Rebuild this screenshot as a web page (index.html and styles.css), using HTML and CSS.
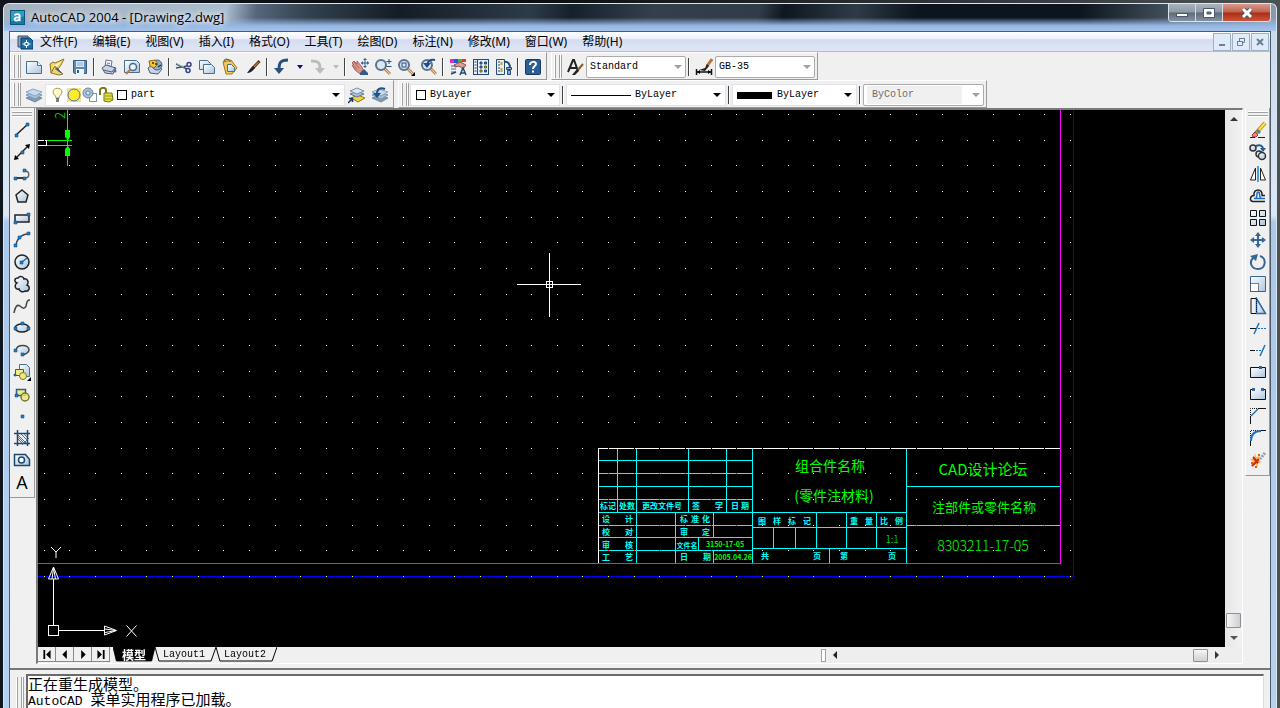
FILE: index.html
```html
<!DOCTYPE html>
<html lang="zh-CN">
<head>
<meta charset="utf-8">
<title>AutoCAD 2004 - [Drawing2.dwg]</title>
<link rel="stylesheet" href="styles.css">
</head>
<body>
<svg class="defs" width="0" height="0" aria-hidden="true">
  <defs>
    <linearGradient id="pale" x1="0" y1="0" x2="1" y2="1"><stop offset="0" stop-color="#fff"/><stop offset="1" stop-color="#a9c4de"/></linearGradient>
    <symbol id="lens" viewBox="0 0 18 18"><path d="M10 10l6 6" stroke="#b98a55" stroke-width="3"/><path d="M10 10l6 6" stroke="#f0d0a0" stroke-width="1"/><circle cx="7" cy="7" r="5" fill="#d9e8f5" stroke="#5d7389" stroke-width="2"/></symbol>
    <symbol id="layers" viewBox="0 0 18 18"><path d="M1 12l7-3 9 3-7 4z" fill="#7f9ab4" stroke="#6f8aa4"/><path d="M1 9l7-3 9 3-7 4z" fill="#a9c0d6" stroke="#7c98b2"/><path d="M1 6l7-3 9 3-7 4z" fill="#c7d9ea" stroke="#8ba4bb"/></symbol>
  </defs>
</svg>
<div class="window">
  <header class="titlebar">
    <svg class="logo" viewBox="0 0 15 15"><rect width="15" height="15" fill="#1479a8"/><path d="M0 0h15v6L0 12z" fill="#2f9cc9"/><path d="M4 5c2-2 6-2 6 1v4c0 1 1 1 1 1M10 7c-7 0-7 4-4 4 2 0 4-1 4-3" fill="none" stroke="#fff" stroke-width="2"/></svg>
    <h1>AutoCAD 2004 - [Drawing2.dwg]</h1>
    <div class="winbtns">
      <button class="wb min" aria-label="最小化"><svg viewBox="0 0 14 10"><rect x="1.500" y="5.500" width="11" height="3" fill="#fff" stroke="#4c566a"/></svg></button>
      <button class="wb max" aria-label="最大化"><svg viewBox="0 0 14 10"><path d="M1.500.5h11v9h-11zM5 4v2h4V4z" fill="#fff" fill-rule="evenodd" stroke="#4c566a"/></svg></button>
      <button class="wb close" aria-label="关闭"><svg viewBox="0 0 14 10"><path d="M3 1l8 8M11 1L3 9" stroke="#4c566a" stroke-width="5"/><path d="M3 1l8 8M11 1L3 9" stroke="#fff" stroke-width="3"/></svg></button>
    </div>
  </header>

  <div class="client">
    <nav class="menubar">
      <svg class="doc" viewBox="0 0 16 16"><path d="M1 2h10v11H1z" fill="#8ea2b5" stroke="#334d66"/><path d="M4 4h9l3 3v8H4z" fill="#186fa8" stroke="#083a66"/><path d="M9.500 6v8M5.500 10h8" stroke="#fff"/><rect x="8" y="8.500" width="3" height="3" fill="#186fa8" stroke="#fff"/></svg>
      <button>文件(F)</button><button>编辑(E)</button><button>视图(V)</button><button>插入(I)</button><button>格式(O)</button><button>工具(T)</button><button>绘图(D)</button><button>标注(N)</button><button>修改(M)</button><button>窗口(W)</button><button>帮助(H)</button>
      <div class="mdi">
        <button aria-label="最小化文档"><svg viewBox="0 0 10 10"><path d="M2 8h6" stroke="#6a7f95" stroke-width="2"/></svg></button>
        <button aria-label="还原文档"><svg viewBox="0 0 10 10"><path d="M3.500 4V1.500h5v4H7M3 1.500h6M1.500 4.500h5v4h-5zM1 4.500h6" fill="none" stroke="#6a7f95"/></svg></button>
        <button aria-label="关闭文档"><svg viewBox="0 0 10 10"><path d="M2 2l6 6M8 2L2 8" stroke="#6a7f95" stroke-width="2"/></svg></button>
      </div>
    </nav>

    <div class="dock">
      <div class="bar" role="toolbar" aria-label="标准">
        <i class="grip"></i>
        <button aria-label="新建"><svg viewBox="0 0 18 18"><path d="M1.500 3.500h11l4 4v8h-15z" fill="url(#pale)" stroke="#45708f"/><path d="M12.500 3.500v4h4" fill="#fff" stroke="#45708f"/></svg></button>
        <button aria-label="打开"><svg viewBox="0 0 18 18"><path d="M2 6l3-2 2 1 9-4-3 6-3 4 5 5-4 1L3 15z" fill="#f0d66a" stroke="#8a752c"/><path d="M5 8l8-4-6 7z" fill="#fff6c0"/><path d="M9 9l5 7-7-5z" fill="#2a5d94"/><path d="M3 15l4-7 2 4" fill="none" stroke="#8a6d1e"/></svg></button>
        <button aria-label="保存"><svg viewBox="0 0 18 18"><path d="M2.500 2.500h13v13h-12l-1-1z" fill="#5f89b5" stroke="#355c86"/><rect x="5" y="3" width="8" height="6" fill="#dce9f5"/><path d="M6 5h6M6 7h6" stroke="#89a8c7"/><rect x="5" y="11" width="8" height="5" fill="#eef4fa"/><rect x="6" y="12" width="2" height="3" fill="#355c86"/></svg></button>
        <i class="sep"></i>
        <button aria-label="打印"><svg viewBox="0 0 18 18"><path d="M5 9l1-7 6 1-1 6" fill="#fff" stroke="#66728c"/><path d="M2 10l4-3 10 3-3 6-8-1z" fill="#cbd3e6" stroke="#4d5a7c"/><path d="M3 12l9 2M12 14l3-4" stroke="#4d5a7c"/><path d="M7 5l3 .5M7 7l3 .5" stroke="#66728c"/><circle cx="15" cy="13" r="1.500" fill="#5a6890"/></svg></button>
        <button aria-label="打印预览"><svg viewBox="0 0 18 18"><path d="M1.500 2.500h12l3 3v9h-15z" fill="url(#pale)" stroke="#45708f"/><circle cx="10" cy="9" r="3.500" fill="#e9f5ff" stroke="#4c6a86" stroke-width="1.500"/><path d="M7.500 11.500L3 16" stroke="#b87942" stroke-width="2"/></svg></button>
        <button aria-label="发布"><svg viewBox="0 0 18 18"><path d="M2 10l4-3 10 4-4 5-8-1z" fill="#cbd3e6" stroke="#4d5a7c"/><circle cx="11" cy="7" r="5" fill="#8fb0d2" stroke="#3f618a"/><path d="M3 3l6-1 3 4-4 4-4-2z" fill="#f5c73c" stroke="#8c6a12"/><path d="M6 5h2M9 6h2M12 9l3-2" stroke="#402c08" stroke-width="1.500"/></svg></button>
        <i class="sep"></i>
        <button aria-label="剪切"><svg viewBox="0 0 18 18"><path d="M1 6l11 5M1 10l11-2" stroke="#40536a" stroke-width="1.500"/><path d="M2 6l7 3" stroke="#a6b6c8"/><circle cx="14" cy="6.500" r="2" fill="none" stroke="#33418a" stroke-width="1.500"/><circle cx="13" cy="12.500" r="2" fill="none" stroke="#33418a" stroke-width="1.500"/></svg></button>
        <button aria-label="复制"><svg viewBox="0 0 18 18"><path d="M1.500 2.500h8l3 3v6h-11z" fill="url(#pale)" stroke="#45708f"/><path d="M5.500 6.500h8l3 3v6h-11z" fill="url(#pale)" stroke="#45708f"/></svg></button>
        <button aria-label="粘贴"><svg viewBox="0 0 18 18"><path d="M2 4l8-2 6 8-5 6H5z" fill="#f0c95c" stroke="#a07524"/><path d="M3 4c0-4 6-3 6 0" fill="none" stroke="#8a6d3a" stroke-width="1.500"/><path d="M6.500 6.500h4l3 3v4h-7z" fill="url(#pale)" stroke="#45708f"/></svg></button>
        <button aria-label="特性匹配"><svg viewBox="0 0 18 18"><path d="M15.500 3L9 10" stroke="#5b3a22" stroke-width="3"/><path d="M14.500 4L10 9" stroke="#d49a62"/><path d="M9 8l2 2c-2 3-5 5-8 5 2-2 3-5 6-7z" fill="#20242c"/></svg></button>
        <i class="sep"></i>
        <button aria-label="放弃"><svg viewBox="0 0 18 18"><path d="M15 2C7 2 6 5 6 12" fill="none" stroke="#274f80" stroke-width="3"/><path d="M1 10h10l-5 6z" fill="#274f80"/></svg></button>
        <button class="drop" aria-label="放弃列表"><svg viewBox="0 0 6 6"><path d="M0 1h6L3 5z" fill="#10107a"/></svg></button>
        <button aria-label="重做" disabled><svg viewBox="0 0 18 18"><path d="M2 3c8 0 9 2 9 8" fill="none" stroke="#bcbcbc" stroke-width="3"/><path d="M6 10h10l-5 6z" fill="#bcbcbc"/></svg></button>
        <button class="drop" aria-label="重做列表" disabled><svg viewBox="0 0 6 6"><path d="M0 1h6L3 5z" fill="#bbb"/></svg></button>
        <i class="sep"></i>
        <button aria-label="实时平移"><svg viewBox="0 0 18 18"><path d="M1 5l2-2 3 3 0-3 5 6 1 3-3 4-5-4-3-5 2 0z" fill="#d9978b" stroke="#a8665e"/><path d="M3 4l5 6M2 8l4 3" stroke="#a8665e"/><path d="M9 15l4-4 4 4v2H9z" fill="#315d91"/><path d="M14 1v8M10 5h8" stroke="#315d91"/><path d="M14 0l2 2h-4zM14 10l2-2h-4zM18 5l-2-2v4zM10 5l2-2v4z" fill="#315d91"/></svg></button>
        <button aria-label="实时缩放"><svg viewBox="0 0 18 18"><use href="#lens"/><path d="M15 1v5M12.500 3.500h5M12.500 8.500h5" stroke="#1f4f8a"/></svg></button>
        <button aria-label="窗口缩放"><svg viewBox="0 0 18 18"><use href="#lens"/><rect x="5" y="5" width="4" height="4" fill="none" stroke="#1f4f8a"/><path d="M18 14v4h-4z"/></svg></button>
        <button aria-label="缩放上一个"><svg viewBox="0 0 18 18"><use href="#lens"/><path d="M15 2c-5-1-7 1-8 5" fill="none" stroke="#1f4f8a" stroke-width="2"/><path d="M3 5h8l-4 5z" fill="#1f4f8a"/></svg></button>
        <i class="sep"></i>
        <button aria-label="特性"><svg viewBox="0 0 18 18"><path d="M1 1h4v4H1z" fill="#e030c0"/><path d="M5 1h4v4H5z" fill="#2a50e0"/><path d="M9 1h4v4H9z" fill="#30c040"/><path d="M13 1h4v3h-4z" fill="#f03020"/><path d="M5 7l6-3 6 3-3 4-4-3-4 1z" fill="#e0a090" stroke="#8a4e48"/><path d="M2 8h5M2 11h5M2 14h5" stroke="#4d7090"/><path d="M2 16l5-2M11 17l3-7 3 7M12 15h4" stroke="#27486f" stroke-width="1.500" fill="none"/></svg></button>
        <button aria-label="设计中心"><svg viewBox="0 0 18 18"><rect x="1.500" y="1.500" width="15" height="15" fill="#e6f0fa" stroke="#244a73"/><path d="M5.500 2v14" stroke="#244a73"/><path d="M2.500 4h2M2.500 7h2M2.500 10h2M2.500 13h2" stroke="#244a73"/><path d="M8 4h2v2H8zM12.500 4h2v2h-2zM8 8h2v2H8zM12.500 12h2v2h-2z" fill="#3a7ab5" stroke="#244a73"/><path d="M12.500 8h2v2h-2zM8 12h2v2H8z" fill="#efc94c" stroke="#6a5718"/></svg></button>
        <button aria-label="工具选项板"><svg viewBox="0 0 18 18"><path d="M1.500 1.500h8v15h-8z" fill="#e6f0fa" stroke="#244a73"/><path d="M3 4h2M3 7h2M3 10h2M3 13h2" stroke="#244a73"/><path d="M6.500 4v3M6.500 10v4" stroke="#d0a020" stroke-width="2"/><path d="M9 4c4-1 6 2 6 6" fill="none" stroke="#244a73" stroke-width="2"/><path d="M11.500 9.500h5v2h-5zM12.500 12.500h3v4h-3z" fill="#8fb0d2" stroke="#244a73"/></svg></button>
        <i class="sep"></i>
        <button aria-label="帮助"><svg viewBox="0 0 18 18"><rect x="1.500" y="1.500" width="15" height="15" rx="1" fill="#2b5f94" stroke="#173a63"/><path d="M6 7c0-4 6-4 6-1 0 2-3 2-3 5M9 12.500v2" fill="none" stroke="#fff" stroke-width="2"/></svg></button>
      </div>
      <div class="bar" role="toolbar" aria-label="样式">
        <i class="grip"></i>
        <button aria-label="文字样式"><svg viewBox="0 0 18 18"><path d="M2 14L7 2h1l4 11M4 10h7" fill="none" stroke="#222" stroke-width="2"/><path d="M17 6l-6 7" stroke="#8a5a34" stroke-width="2"/><path d="M11 11l2 2-4 4H6z" fill="#222"/></svg></button>
        <div class="combo w100 soft"><select aria-label="文字样式名"><option>Standard</option></select><svg class="arr" viewBox="0 0 8 4"><path d="M0 0h8L4 4z" fill="#a0a0a0"/></svg></div>
        <i class="sep"></i>
        <button aria-label="标注样式"><svg viewBox="0 0 18 18"><path d="M17 1l-5 7" stroke="#b9743c" stroke-width="3"/><path d="M12 6l2 2-4 5-6-1 6-2z" fill="#222"/><path d="M1.500 11v6M16.500 11v6M2 14h14" stroke="#111" stroke-width="1.500"/><path d="M2 14l3-2v4zM16 14l-3-2v4z"/></svg></button>
        <div class="combo w100 soft"><select aria-label="标注样式名"><option>GB-35</option></select><svg class="arr" viewBox="0 0 8 4"><path d="M0 0h8L4 4z" fill="#a0a0a0"/></svg></div>
      </div>
    </div>
    <div class="dock">
      <div class="bar" role="toolbar" aria-label="图层">
        <i class="grip"></i>
        <button aria-label="图层特性管理器"><svg viewBox="0 0 18 18"><use href="#layers"/></svg></button>
        <div class="combo w300">
          <svg class="st" viewBox="0 0 16 16"><path d="M6 11c0-3-3-3-3-6 0-5 9-5 9 0 0 3-3 3-3 6z" fill="#fffbd0" stroke="#a39445"/><path d="M6 12h3M6 14h3" stroke="#555" stroke-width="1.500"/></svg>
          <svg class="st" viewBox="0 0 16 16"><path d="M1 1h14v14H1z" fill="#f3e38a"/><circle cx="8" cy="8" r="6" fill="#ffe92e" stroke="#4878a8"/></svg>
          <svg class="st" viewBox="0 0 16 16"><rect x="7.500" y="6.500" width="7" height="8" fill="#fff" stroke="#7f97ad"/><circle cx="6" cy="6" r="5" fill="#a8bfd4" stroke="#6786a3"/><circle cx="6" cy="6" r="2" fill="#dfe9f2" stroke="#6786a3"/></svg>
          <svg class="st" viewBox="0 0 16 16"><path d="M2 8V4c0-4 6-4 6-1v3" fill="none" stroke="#77781c" stroke-width="2"/><path d="M6 6h8l1 7-4 2-5-1z" fill="#e0df3c" stroke="#77781c"/><path d="M7 9h7M7 12h7" stroke="#9a991f"/></svg>
          <i class="swatch"></i>
          <select aria-label="当前图层"><option>part</option></select><svg class="arr" viewBox="0 0 8 4"><path d="M0 0h8L4 4z"/></svg>
        </div>
        <button aria-label="将对象的图层置为当前"><svg viewBox="0 0 18 18"><path d="M3 12l7-3 7 3-7 4z" fill="#f0d33c" stroke="#8f7a18"/><path d="M2 8l7-3 7 3-7 3z" fill="#a9c0d6" stroke="#5c7892"/><path d="M2 5l7-3 7 3-7 3z" fill="#dbe7f2" stroke="#7891a8"/><path d="M0 17l4-4M1 12.500h3.500V16" fill="none" stroke="#173a63" stroke-width="1.500"/></svg></button>
        <button aria-label="上一个图层"><svg viewBox="0 0 18 18"><use href="#layers"/><path d="M14 3c-5-2-8 0-8 5" fill="none" stroke="#1f4f8a" stroke-width="2"/><path d="M2 7h8l-4 5z" fill="#1f4f8a"/></svg></button>
      </div>
      <div class="bar" role="toolbar" aria-label="对象特性">
        <i class="grip"></i>
        <div class="combo w150"><i class="swatch lead"></i><select aria-label="颜色"><option>ByLayer</option></select><svg class="arr" viewBox="0 0 8 4"><path d="M0 0h8L4 4z"/></svg></div>
        <i class="sep"></i>
        <div class="combo w160"><i class="linetype"></i><select aria-label="线型"><option>ByLayer</option></select><svg class="arr" viewBox="0 0 8 4"><path d="M0 0h8L4 4z"/></svg></div>
        <i class="sep"></i>
        <div class="combo w125"><i class="weight"></i><select aria-label="线宽"><option>ByLayer</option></select><svg class="arr" viewBox="0 0 8 4"><path d="M0 0h8L4 4z"/></svg></div>
        <i class="sep"></i>
        <div class="combo w121 soft off"><select aria-label="打印样式" disabled><option>ByColor</option></select><svg class="arr" viewBox="0 0 8 4"><path d="M0 0h8L4 4z" fill="#a0a0a0"/></svg></div>
      </div>
    </div>

    <main class="work">
      <div class="side" role="toolbar" aria-label="绘图">
        <i class="hgrip"></i>
        <button aria-label="直线"><svg viewBox="0 0 18 18"><path d="M3 14L15 3" stroke="#222" stroke-width="1.500"/><path class="n" d="M2 13h3v3H2zM13 2h3v3h-3z"/></svg></button>
        <button aria-label="构造线"><svg viewBox="0 0 18 18"><path d="M3 15L15 3" stroke="#222" stroke-width="1.500"/><path d="M1 17l1-5 4 4zM17 1l-1 5-4-4z"/><path class="n" d="M8 8h3v3H8z"/></svg></button>
        <button aria-label="多段线"><svg viewBox="0 0 18 18"><path d="M3 13h9c5 0 5-7 0-7" fill="none" stroke="#666" stroke-width="1.500"/><path d="M3 13h8" stroke="#222" stroke-width="1.500"/><path class="n" d="M1 12h3v3H1zM10 12h3v3h-3zM10 4h3v3h-3z"/></svg></button>
        <button aria-label="正多边形"><svg viewBox="0 0 18 18"><path d="M9 3l6 5-2 7H5L3 8z" fill="url(#pale)" stroke="#222" stroke-width="1.500"/></svg></button>
        <button aria-label="矩形"><svg viewBox="0 0 18 18"><path d="M2 6h14v7H2z" fill="url(#pale)" stroke="#222" stroke-width="1.500"/><path class="n" d="M1 12h3v3H1zM14 4h3v3h-3z"/></svg></button>
        <button aria-label="圆弧"><svg viewBox="0 0 18 18"><path d="M3 15C3 9 8 3 15 3" fill="none" stroke="#444" stroke-width="1.500"/><path class="n" d="M1 13h3v3H1zM5 5h3v3H5zM14 1h3v3h-3z"/></svg></button>
        <button aria-label="圆"><svg viewBox="0 0 18 18"><circle cx="9" cy="9" r="7" fill="url(#pale)" stroke="#222" stroke-width="1.500"/><path d="M9 9l5-4" stroke="#1a66b0" stroke-width="1.500"/><path class="n" d="M7 8h3v3H7z"/></svg></button>
        <button aria-label="修订云线"><svg viewBox="0 0 18 18"><path d="M4 8C1 7 1 3 5 3c2-3 6-1 6 1 4-1 5 4 3 6 4 2 2 7-2 6-2 2-6 0-6-2-4 1-5-4-2-6z" fill="url(#pale)" stroke="#222" stroke-width="1.500"/></svg></button>
        <button aria-label="样条曲线"><svg viewBox="0 0 18 18"><path d="M1 16c1-6 3-9 6-7 3 3 5 3 6 0 1-4 1-6 4-6" fill="none" stroke="#444" stroke-width="1.500"/></svg></button>
        <button aria-label="椭圆"><svg viewBox="0 0 18 18"><ellipse cx="9" cy="9" rx="7" ry="4" fill="url(#pale)" stroke="#222" stroke-width="1.500"/><path class="n" d="M1 8h3v3H1zM14 8h3v3h-3zM8 3h3v3H8z"/></svg></button>
        <button aria-label="椭圆弧"><svg viewBox="0 0 18 18"><path d="M3 9c1-6 13-6 13 0 0 3-3 4-7 5" fill="url(#pale)" stroke="#444" stroke-width="1.500"/><path class="n" d="M1 8h3v3H1zM8 12h3v3H8z"/></svg></button>
        <button aria-label="插入块"><svg viewBox="0 0 18 18"><path d="M6.500 1.500h7l3 3v9h-10z" fill="url(#pale)" stroke="#45708f"/><path d="M2.500 6.500h8v6h-8z" fill="#f0ec8a" stroke="#355c86"/><circle cx="10" cy="13" r="3.500" fill="#eee97c" stroke="#77782a"/><path class="n" d="M1 11h2v2H1z"/><path d="M18 14v4h-4z"/></svg></button>
        <button aria-label="创建块"><svg viewBox="0 0 18 18"><path d="M3.500 4.500h9v6h-9z" fill="#f0ec8a" stroke="#355c86" stroke-width="1.500"/><circle cx="12" cy="12" r="4" fill="#eee97c" fill-opacity=".8" stroke="#77782a" stroke-width="1.500"/><path class="n" d="M2 9h3v3H2z"/></svg></button>
        <button aria-label="点"><svg viewBox="0 0 18 18"><path class="n" d="M8 8h3v3H8z"/></svg></button>
        <button aria-label="图案填充"><svg viewBox="0 0 18 18"><path d="M4.500 1v16M14.500 1v16M1 4.500h16M1 14.500h16" stroke="#1c4770" stroke-width="1.500"/><path d="M5 6l8 8M5 10l4 4M8 5l6 6M5 8l6 6M11 5l3 3M16 9l-7 7" stroke="#3f6f9c"/></svg></button>
        <button aria-label="面域"><svg viewBox="0 0 18 18"><path d="M1.500 3.500h11l4 5v6h-15z" fill="url(#pale)" stroke="#1c4770" stroke-width="1.500"/><circle cx="8.500" cy="9" r="3" fill="#fff" stroke="#1c4770" stroke-width="1.500"/></svg></button>
        <button class="letter">A</button>
      </div>

      <section class="viewport">
        <div class="row">
          <svg class="canvas" role="img" aria-label="图纸">
            <defs>
              <path id="dots" d="M44 .5h1M69 .5h1M95 .5h1M121 .5h1M146 .5h1M172 .5h1M198 .5h1M223 .5h1M249 .5h1M275 .5h1M300 .5h1M326 .5h1M352 .5h1M377 .5h1M403 .5h1M429 .5h1M454 .5h1M480 .5h1M506 .5h1M531 .5h1M557 .5h1M582 .5h1M608 .5h1M634 .5h1M659 .5h1M685 .5h1M711 .5h1M736 .5h1M762 .5h1M788 .5h1M813 .5h1M839 .5h1M865 .5h1M890 .5h1M916 .5h1M942 .5h1M967 .5h1M993 .5h1M1019 .5h1M1044 .5h1M1070 .5h1"/>
            </defs>
            <g transform="translate(-38 -110)">
            <g class="lines">
              <path class="blue" d="M38 576.500h1035.500V110"/>
              <path class="cyan" d="M598 460.500h155M598 473.500h155M598 486.500h155M598 499.500h155M598 512.500h309M598 525.500h155M598 537.500h155M598 550.500h155M617.500 449v63M636.500 449v114M688.500 449v63M726.500 449v63M752.500 449v114M675.500 513v50M713.500 513v25M698.500 538v13M713.500 551v12M752 527.500h155M752 548.500h155M773.500 528v20M795.500 528v20M816.500 513v35M846.500 513v35M876.500 513v35M829.500 549v14M906.500 449v114M907 486.500h153M907 525.500h153"/>
              <path class="white" d="M598.500 563V448.500H1060"/>
              <path class="magenta" d="M38 563.500h1022.500V110"/>
              <path class="green" d="M67.500 110v56M47 140.500h25M47 145.500h25"/>
              <path class="white" d="M38 140.500h8.500v5H38"/>
              <path class="white" d="M517 284.500h64M549.500 253v64M546.500 281.500h6v6h-6zM48.500 625.500h10v10h-10zM53.500 625v-46M58 630.500h46"/>
            </g>
            <path class="fillgreen" d="M65 130h5v7l-2 3-3-3zM65 156h5v-7l-2-3-3 3z"/>
            <path class="thin" d="M53.500 567l-5 12h10zM53.500 568l-1.500 11M53.500 568l2 11M104.500 626l12 4.500-12 4.500zM105 629l11 1.500M105 632.500l11-2M51 547l5 5 5-5M56 552v6M126.500 625.500l10 11M136.500 625.500l-10 11"/>
            <text class="dim" transform="translate(65 119) rotate(-90)">2</text>
            <g class="cell">
              <text x="608" y="509">标记</text><text x="627" y="509">处数</text><text x="662" y="509">更改文件号</text>
              <text x="696" y="509">签</text><text x="719" y="509">字</text><text x="735" y="509">日</text><text x="745" y="509">期</text>
              <text x="606" y="522">设</text><text x="629" y="522">计</text><text x="684" y="522">标</text><text x="695" y="522">准</text><text x="706" y="522">化</text>
              <text x="606" y="535">校</text><text x="629" y="535">对</text><text x="684" y="535">审</text><text x="706" y="535">定</text>
              <text x="606" y="548">审</text><text x="629" y="548">核</text><text x="687" y="548" class="narrow">文件名</text>
              <text x="606" y="560">工</text><text x="629" y="560">艺</text><text x="684" y="560">日</text><text x="707" y="560">期</text>
              <text x="762" y="524">图</text><text x="777" y="524">样</text><text x="792" y="524">标</text><text x="807" y="524">记</text>
              <text x="854" y="524">重</text><text x="869" y="524">量</text><text x="884" y="524">比</text><text x="899" y="524">例</text>
              <text x="765" y="559">共</text><text x="817" y="559">页</text><text x="844" y="559">第</text><text x="892" y="559">页</text>
            </g>
            <g class="num"><text x="725" y="547">3150-17-05</text><text x="733" y="560">2005.04.26</text></g>
            <g class="big">
              <text x="830" y="471">组合件名称</text><text x="834" y="501">(零件注材料)</text>
              <text class="org" x="983" y="475">CAD设计论坛</text><text class="part" x="984" y="512">注部件或零件名称</text>
              <text class="code" x="983" y="551">8303211-17-05</text><text class="scale" x="892" y="543">1:1</text>
            </g>
            <g class="grid">
              <use href="#dots" y="114"/><use href="#dots" y="140"/><use href="#dots" y="165"/><use href="#dots" y="191"/><use href="#dots" y="217"/><use href="#dots" y="242"/><use href="#dots" y="268"/><use href="#dots" y="294"/><use href="#dots" y="319"/><use href="#dots" y="345"/><use href="#dots" y="371"/><use href="#dots" y="396"/><use href="#dots" y="422"/><use href="#dots" y="448"/><use href="#dots" y="473"/><use href="#dots" y="499"/><use href="#dots" y="525"/><use href="#dots" y="550"/><use href="#dots" y="576"/>
            </g>
            </g>
          </svg>
          <div class="vscroll" role="scrollbar" aria-label="垂直滚动" aria-controls="cmd" aria-valuenow="96">
            <svg viewBox="0 0 8 4"><path d="M0 4h8L4 0z" fill="#333"/></svg>
            <i class="thumb"></i>
            <svg viewBox="0 0 8 4"><path d="M0 0h8L4 4z" fill="#555"/></svg>
          </div>
        </div>
        <div class="foot">
          <div class="nav">
            <button aria-label="第一个"><svg viewBox="0 0 10 10"><path d="M1 0h2v10H1zM9 0v10L4 5z"/></svg></button>
            <button aria-label="上一个"><svg viewBox="0 0 10 10"><path d="M7 0v10L2 5z"/></svg></button>
            <button aria-label="下一个"><svg viewBox="0 0 10 10"><path d="M3 0v10l5-5z"/></svg></button>
            <button aria-label="最后一个"><svg viewBox="0 0 10 10"><path d="M1 0v10l5-5zM7 0h2v10H7z"/></svg></button>
          </div>
          <div class="tabs">
            <button class="tab on"><svg preserveAspectRatio="none" viewBox="0 0 62 15"><path d="M0 0h62l-5 14H5z"/></svg><span>模型</span></button>
            <button class="tab"><svg preserveAspectRatio="none" viewBox="0 0 62 15"><path d="M0 0l4 14h53l5-14"/></svg><span>Layout1</span></button>
            <button class="tab"><svg preserveAspectRatio="none" viewBox="0 0 62 15"><path d="M0 0l4 14h53l5-14"/></svg><span>Layout2</span></button>
          </div>
          <div class="hscroll" role="scrollbar" aria-label="水平滚动" aria-orientation="horizontal" aria-controls="cmd" aria-valuenow="98">
            <i class="split"></i>
            <svg viewBox="0 0 4 8"><path d="M4 0v8L0 4z" fill="#222"/></svg>
            <i class="thumb"></i>
            <svg viewBox="0 0 4 8"><path d="M0 0v8l4-4z" fill="#333"/></svg>
          </div>
        </div>
      </section>

      <div class="side right" role="toolbar" aria-label="修改">
        <i class="hgrip"></i>
        <button aria-label="删除"><svg viewBox="0 0 18 18"><path d="M16 2L6 13" stroke="#b98e12" stroke-width="4"/><path d="M16 2L8 11" stroke="#ffe14a" stroke-width="2"/><path d="M9 8l3 3-2 2-3-3z" fill="#4c7cab"/><path d="M6 11l3 3-2 2H4l-1-2z" fill="#f08080" stroke="#9c3d3d"/><path d="M1 16.500h5M9 16.500h7" stroke="#222"/></svg></button>
        <button aria-label="复制对象"><svg viewBox="0 0 18 18"><circle cx="4" cy="5" r="3" fill="url(#pale)" stroke="#333" stroke-width="1.500"/><circle cx="10" cy="11" r="3" fill="url(#pale)" stroke="#333" stroke-width="1.500"/><circle cx="13" cy="13" r="3.500" fill="url(#pale)" stroke="#333" stroke-width="1.500"/><path d="M7 3c4-2 7 0 7 3" fill="none" stroke="#225a92" stroke-width="2"/><path d="M11 5h6l-3 4z" fill="#225a92"/></svg></button>
        <button aria-label="镜像"><svg viewBox="0 0 18 18"><path d="M6.500 3v12h-5zM11.500 3v12h5z" fill="#fff" stroke="#222"/><path d="M9 1v16" stroke="#1686d9" stroke-width="1.500"/></svg></button>
        <button aria-label="偏移"><svg viewBox="0 0 18 18"><path d="M16 14.500H4c-4 0-3-6 1-6C4 1 14 1 13 8.500h3" fill="none" stroke="#222" stroke-width="1.500"/><path d="M16 11.500H5M7 11c2-2 0-6 2-6 3 0 0 4 3 6" fill="none" stroke="#1b6fc4" stroke-width="1.500"/></svg></button>
        <button aria-label="阵列"><svg viewBox="0 0 18 18"><path d="M1.500 1.500h6v6h-6zM10.500 1.500h6v6h-6zM1.500 10.500h6v6h-6zM10.500 10.500h6v6h-6z" fill="url(#pale)" stroke="#111"/></svg></button>
        <button aria-label="移动"><svg viewBox="0 0 18 18"><path d="M9 3v12M3 9h12" stroke="#366596" stroke-width="2"/><path d="M9 1l3 4H6zM9 17l3-4H6zM1 9l4-3v6zM17 9l-4-3v6z" fill="#366596"/></svg></button>
        <button aria-label="旋转"><svg viewBox="0 0 18 18"><path d="M11 3c7 2 6 13-2 13-7 0-9-7-5-11" fill="none" stroke="#366596" stroke-width="2"/><path d="M1 3l8-2-2 7z" fill="#366596"/></svg></button>
        <button aria-label="缩放"><svg viewBox="0 0 18 18"><path d="M1.500 1.500h15v15h-15z" fill="url(#pale)" stroke="#366596"/><path d="M1.500 8.500h8v8h-8z" fill="#fff" stroke="#111" stroke-dasharray="1 1"/></svg></button>
        <button aria-label="拉伸"><svg viewBox="0 0 18 18"><path d="M7.500 1.500l9 15h-9z" fill="url(#pale)" stroke="#366596" stroke-width="1.500"/><path d="M7 1.500H2v15h5" fill="none" stroke="#111"/><path d="M7.500 2v14" stroke="#111" stroke-dasharray="1 1"/></svg></button>
        <button aria-label="修剪"><svg viewBox="0 0 18 18"><path d="M1 9.500h6" stroke="#111"/><path d="M9 9.500h8" stroke="#1b6fc4" stroke-dasharray="2 1"/><path d="M5 15l5-11" stroke="#1b6fc4" stroke-width="1.500"/></svg></button>
        <button aria-label="延伸"><svg viewBox="0 0 18 18"><path d="M1 9.500h5" stroke="#111"/><path d="M7 9.500h6" stroke="#1b6fc4" stroke-dasharray="2 1"/><path d="M11 15l5-11" stroke="#1b6fc4" stroke-width="1.500"/></svg></button>
        <button aria-label="打断于点"><svg viewBox="0 0 18 18"><path d="M1.500 4.500h15v10h-15z" fill="url(#pale)" stroke="#111"/><path d="M10 3h3v3h-3z" fill="#366596"/></svg></button>
        <button aria-label="打断"><svg viewBox="0 0 18 18"><path d="M4 4.500H1.500v10h15v-10H14" fill="url(#pale)" stroke="#111"/><path d="M3 3h3v3H3zM12 3h3v3h-3z" fill="#366596"/></svg></button>
        <button aria-label="倒角"><svg viewBox="0 0 18 18"><path d="M1.500 17V9M9 1.500h8" stroke="#111"/><path d="M1.500 8V1.500H9" fill="none" stroke="#111" stroke-dasharray="1 1"/><path d="M2 9l7-7" stroke="#1b6fc4" stroke-width="1.500"/></svg></button>
        <button aria-label="圆角"><svg viewBox="0 0 18 18"><path d="M1.500 17v-6M11 1.500h6" stroke="#111"/><path d="M1.500 9V1.500H10" fill="none" stroke="#111" stroke-dasharray="1 1"/><path d="M2 12C2 5 5 2 12 2" fill="none" stroke="#1b6fc4" stroke-width="2"/></svg></button>
        <button aria-label="分解"><svg viewBox="0 0 18 18"><path d="M16 2l-5 6" stroke="#8fa3b5" stroke-width="3" stroke-dasharray="2 1"/><path d="M6 2l1 4 4-1-2 4 4 2-4 1 0 4-3-3-4 2 2-4-3-3 4 0z" fill="#f5b92a"/><path d="M3 15l7-7M4 6l5 6" stroke="#c62a1a" stroke-width="2"/><path d="M2 12h2M6 16h2M9 4h2" stroke="#e2591c" stroke-width="2"/></svg></button>
      </div>
    </main>

    <section class="command">
      <i class="grip"></i>
      <div class="log" id="cmd" role="log"><p>正在重生成模型。</p><p><span>AutoCAD </span>菜单实用程序已加载。</p></div>
    </section>
  </div>
</div>
</body>
</html>
```
FILE: styles.css
```css
* { box-sizing: border-box; }
body {
  margin: 0;
  height: 100vh;
  padding: 3px 3px 0;
  overflow: hidden;
  background: linear-gradient(90deg, #10161d, #0a0d10 40%, #4b5256);
  font: 12px/16px "Noto Sans", "Noto Sans CJK SC", sans-serif;
  color: #000;
}
button { margin: 0; padding: 0; border: 0; background: none; font: inherit; color: inherit; }
svg { display: block; flex: none; }
p, h1 { margin: 0; font-weight: 400; }
.defs { position: absolute; }

.window {
  height: 100%;
  display: flex;
  flex-direction: column;
  border: 1px solid #dfe7ee;
  border-bottom: 0;
  border-radius: 6px 6px 0 0;
  overflow: hidden;
  padding: 0 5px;
  background: linear-gradient(#c7d8ec, #dce8f6 30%, #a9c8ea 31%, #b4d1f0);
}
.titlebar {
  flex: none;
  display: flex;
  align-items: center;
  height: 27px;
  margin: 0 -5px;
  padding-left: 6px;
  background:
    linear-gradient(transparent 50%, #93b6e2 80%, #a6c4ea),
    linear-gradient(100deg, #a6b1bd 0, #a9bccf 220px, #56657a 250px, #33424f 300px, #141c26 390px, #2d3b48 520px, #15202b 560px, #33404c 640px, #303d49 745px, #0e1620 770px, #2e3b47 840px, #0c141d 900px, #0c141d 1060px, #4a5865 1160px, #8e9cab);
}
.logo { width: 15px; height: 15px; border: 1px solid #0d5479; }
.titlebar h1 { flex: 1; padding: 0 0 2px 6px; font: 13px/20px "Open Sans", sans-serif; text-shadow: 0 0 6px #fff, 0 0 8px #fff; }
.winbtns { display: flex; align-self: flex-start; margin-right: 5px; height: 18px; border: 1px solid #dde3ea; border-top: 0; border-radius: 0 0 4px 4px; overflow: hidden; }
.wb { display: grid; place-items: center; width: 27px; background: linear-gradient(#a9b3be, #8d99a6 48%, #5d6a78 52%, #8592a0); border-right: 1px solid #d5dbe2; }
.wb svg { width: 14px; height: 10px; }
.wb.close { width: 47px; border: 0; background: linear-gradient(#d69a8e, #c3604c 48%, #a92d16 52%, #cc5438); }

.client { flex: 1; min-height: 0; display: flex; flex-direction: column; border: 1px solid #4e5a68; border-bottom: 0; background: #f0f0f0; }
.menubar { flex: none; display: flex; align-items: center; height: 20px; gap: 15px; padding-left: 7px; border-bottom: 1px solid #b4bbd0; background: linear-gradient(#fff, #eef1f9 35%, #d5dcf0 40%, #e0e6f5); }
.doc { width: 16px; height: 16px; margin-right: -8px; }
.mdi { display: flex; gap: 1px; margin-left: auto; padding-right: 1px; }
.mdi button { display: grid; place-items: center; width: 18px; height: 18px; border: 1px solid #9db2c5; background: #dfebf8; }
.mdi svg { width: 10px; height: 10px; }

.dock { flex: none; display: flex; height: 28px; }
.bar { display: flex; align-items: center; height: 28px; padding: 2px 2px 0; border: 1px solid #fff; border-right-color: #999; border-bottom-color: #999; margin-right: 4px; }
.bar button, .side button { display: grid; place-items: center; flex: none; width: 23px; height: 22px; }
.bar button svg, .side button svg { width: 18px; height: 18px; }
.bar button.drop { width: 13px; }
.bar button.drop svg { width: 6px; height: 6px; }
.grip { flex: none; align-self: stretch; width: 7px; margin: 0 2px 1px 0; border: solid #fff; border-width: 0 1px; box-shadow: inset -1px 0 #a0a0a0, inset 1px 0 #a0a0a0, 1px 0 #a0a0a0; }
.sep { flex: none; width: 2px; height: 18px; margin: 0 2px; border-left: 1px solid #444; border-right: 1px solid #fff; }
.combo { display: flex; align-items: center; height: 22px; padding: 0 4px; background: #fff; border: 1px solid #e2e3ea; }
.combo.soft { border: 1px solid #acacac; border-radius: 2px; padding: 0 3px; }
.combo select { appearance: none; flex: 1; min-width: 0; height: 18px; margin: 0; padding: 0; border: 0; border-radius: 0; background: none; font: 10px/18px "Liberation Mono", monospace; color: #000; opacity: 1; }
.combo.off select { background: #f0f0f0; color: #6d6d6d; padding-left: 5px; margin-right: 10px; }
.arr { width: 8px; height: 4px; }
.w100 { width: 100px; }
.w300 { width: 300px; }
.w150 { width: 150px; }
.w160 { width: 160px; }
.w125 { width: 125px; }
.w121 { width: 121px; }
.st { width: 16px; height: 16px; }
.swatch { flex: none; width: 10px; height: 10px; border: 1px solid #000; margin: 0 4px 0 3px; }
.lead { margin-left: 1px; }
.linetype { flex: none; width: 60px; height: 1px; background: #000; margin-right: 4px; }
.weight { flex: none; width: 35px; height: 7px; background: #000; margin-right: 5px; }

.work { flex: 1; min-height: 0; display: flex; align-items: stretch; }
.side { flex: none; align-self: flex-start; display: flex; flex-direction: column; align-items: center; width: 25px; padding-bottom: 4px; border-right: 1px solid #999; border-bottom: 1px solid #999; margin-right: 1px; }
.side.right { margin: 0; border-left: 1px solid #fff; }
.hgrip { width: 20px; height: 6px; margin: 3px 0 2px; border: solid #fff; border-width: 1px 0; box-shadow: inset 0 1px #a0a0a0, inset 0 -1px #a0a0a0; }
.n { fill: #1585d8; stroke: #0a3f78; stroke-width: 0.5px; }
.side .letter { font: 18px/20px "Open Sans", sans-serif; }

.viewport { flex: 1; min-width: 0; display: flex; flex-direction: column; margin-right: 2px; border: 2px solid #7a7a7a; border-right: 1px solid #fff; border-bottom: 1px solid #fff; }
.row { flex: 1; min-height: 0; display: flex; }
.canvas { flex: 1; min-width: 0; width: 0; height: 100%; background: #000; isolation: isolate; overflow: hidden; }
.lines { fill: none; stroke-width: 1px; shape-rendering: crispEdges; }
.blue { stroke: #00f; }
.cyan { stroke: #0ff; }
.white { stroke: #fff; }
.magenta { stroke: #f0f; }
.green { stroke: #0f0; }
.fillgreen, .dim { fill: #0f0; }
.thin { fill: none; stroke: #fff; stroke-width: 1px; }
.grid { stroke: #fff; shape-rendering: crispEdges; mix-blend-mode: difference; }
.canvas text { font-family: "Noto Sans CJK SC", sans-serif; }
.canvas .dim { font-size: 13px; font-weight: 300; }
.cell { fill: #0ff; font-size: 8px; font-weight: 700; text-anchor: middle; }
.narrow { font-size: 7px; }
.num { fill: #0f0; font-size: 7px; font-weight: 700; text-anchor: middle; }
.big { fill: #0f0; font-size: 14px; font-weight: 400; text-anchor: middle; }
.big .org { font-size: 15px; }
.big .part { font-size: 13px; }
.big .code { font-size: 14px; font-weight: 300; }
.big .scale { font-size: 10px; font-weight: 300; }

.vscroll { flex: none; display: flex; flex-direction: column; align-items: center; width: 17px; padding: 7px 0; background: linear-gradient(90deg, #e6e6e6, #f2f2f2); }
.vscroll svg { width: 8px; height: 4px; }
.thumb { width: 15px; height: 15px; border: 1px solid #8f8f96; border-radius: 1px; background: linear-gradient(90deg, #f6f6f6, #cfcfd4); }
.vscroll .thumb { margin: auto 0 8px; }
.foot { flex: none; display: flex; height: 16px; }
.nav { display: flex; }
.nav button { display: grid; place-items: center; width: 18px; height: 15px; border-right: 1px solid #8a8a8a; border-bottom: 1px solid #8a8a8a; }
.nav svg { width: 10px; height: 9px; }
.tabs { display: flex; height: 15px; margin-left: 3px; }
.tab { position: relative; width: 61px; padding-right: 3px; font: 10px/14px "Liberation Mono", monospace; }
.tab svg { position: absolute; inset: 0; width: 100%; height: 100%; fill: #f0f0f0; stroke: #000; }
.tab span { position: relative; }
.tab.on { width: 42px; padding: 0; color: #fff; font: 700 12px/14px "Noto Sans CJK SC", sans-serif; }
.tab.on svg { fill: #000; }
.hscroll { display: flex; align-items: center; width: 35%; margin-left: auto; padding-right: 23px; background: #eee; }
.hscroll svg { width: 4px; height: 8px; }
.hscroll .split { width: 5px; height: 13px; margin-right: 7px; border: 1px solid #9aa; background: #fff; }
.hscroll .thumb { height: 13px; margin: 0 7px 0 auto; background: linear-gradient(#f6f6f6, #cfcfd4); }

.command { flex: none; display: flex; height: 40px; margin-top: 4px; padding: 4px 6px 0; border-top: 2px solid #777; }
.command .grip { margin: 3px 3px 0 0; }
.log { flex: 1; overflow: hidden; background: #fff; border: 2px solid #6a6a6a; border-right: 1px solid #ddd; border-bottom: 0; font: 15px/15px "Noto Sans CJK SC", sans-serif; }
.log span { font: 13px/15px "Liberation Mono", monospace; white-space: pre; }
```
